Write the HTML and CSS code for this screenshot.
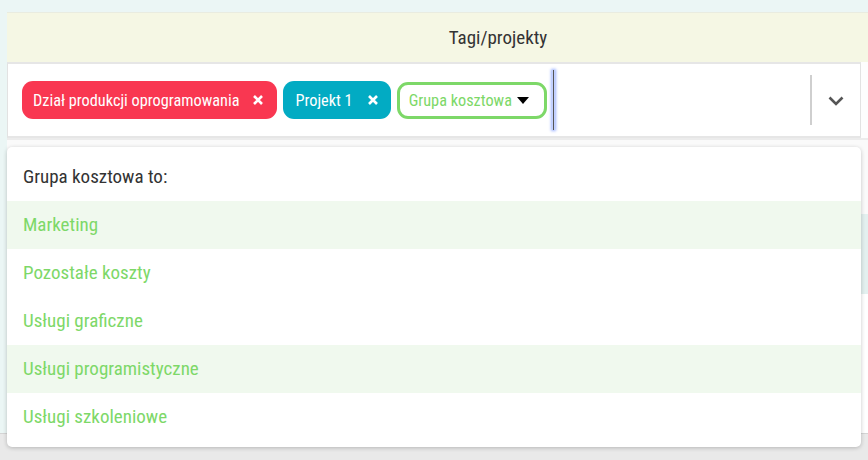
FILE: index.html
```html
<!DOCTYPE html>
<html>

<head>
    <title>Tagi/projekty</title>
    <link rel="stylesheet" href="styles.css">
</head>

<body>
    <div class="page">
        <div class="card">
            <div class="card-head">Tagi/projekty</div>
            <div class="select">
                <div class="tags">
                    <span class="tag tag-red">Dział produkcji oprogramowania
                        <svg class="tag-x" width="10" height="10" viewBox="0 0 10 10"><path d="M1 1L9 9M9 1L1 9" /></svg>
                    </span>
                    <span class="tag tag-teal">Projekt 1
                        <svg class="tag-x" width="10" height="10" viewBox="0 0 10 10"><path d="M1 1L9 9M9 1L1 9" /></svg>
                    </span>
                    <span class="tag tag-group">Grupa kosztowa
                        <svg class="caret" width="12" height="7" viewBox="0 0 12 7"><path d="M0 0H12L6 7Z" /></svg>
                    </span>
                    <span class="cursor"></span>
                </div>
                <div class="indicators">
                    <span class="sep"></span>
                    <svg class="chevron" width="16" height="10" viewBox="0 0 16 10"><path d="M1.5 1.5L8 8L14.5 1.5" /></svg>
                </div>
            </div>
            <div class="below">
                <div class="below-gap"></div>
                <div class="below-row"></div>
                <div class="below-rest"></div>
            </div>
        </div>
        <div class="footer"></div>

        <!-- dropdown opened over the table -->
        <div class="menu">
            <div class="menu-title">Grupa kosztowa to:</div>
            <div class="menu-item active">Marketing</div>
            <div class="menu-item">Pozostałe koszty</div>
            <div class="menu-item">Usługi graficzne</div>
            <div class="menu-item active">Usługi programistyczne</div>
            <div class="menu-item">Usługi szkoleniowe</div>
        </div>
    </div>
</body>

</html>
```

FILE: styles.css
```css
body {
    margin: 0;
    background-color: #ebf6f5;
    font-family: Roboto, "Liberation Sans", sans-serif;
    font-stretch: 87.5%;
    overflow: hidden;
}

.page {
    position: relative;
    height: 460px;
    display: flex;
    flex-direction: column;
    overflow: hidden;
}

.card {
    margin: 12px 0 0 7px;
    width: 982px;
    background-color: #fdfdfd;
}

.card-head {
    height: 49px;
    line-height: 49px;
    background-color: #f5f7e4;
    border-top: 1px solid #e9ece0;
    text-align: center;
    font-size: 19px;
    color: #333;
}

.select {
    width: 852px;
    height: 72px;
    display: flex;
    align-items: center;
    justify-content: space-between;
    background-color: #fff;
    border-top: 2px solid #e6e6e6;
    border-bottom: 2px solid #e6e6e6;
    border-left: 1px solid #e2e2e2;
    border-right: 1px solid #e2e2e2;
}

.tags {
    display: flex;
    align-items: center;
    gap: 6px;
    padding-left: 14px;
}

.tag {
    display: flex;
    align-items: center;
    height: 38px;
    border-radius: 11px;
    font-size: 16.3px;
    color: #fff;
    box-sizing: border-box;
}

.tag-red {
    background-color: #f93751;
    padding: 0 14px 0 11px;
    gap: 14px;
}

.tag-teal {
    background-color: #02abc3;
    padding: 0 13px 0 12px;
    gap: 15px;
}

.tag-x path {
    stroke: #fff;
    stroke-width: 2.6;
    fill: none;
}

.tag-group {
    height: 37px;
    border: 3px solid #7dd868;
    background-color: #fff;
    color: #7dd868;
    padding: 0 15px 0 9px;
    gap: 5px;
}

.caret path {
    fill: #000;
}

.cursor {
    width: 1px;
    height: 60px;
    margin-left: -1px;
    background-color: #555;
    border-left: 1px solid #c4d2ff;
    border-right: 1px solid #c4d2ff;
    box-shadow: 0 0 3px 1px #9fb5ff;
}

.indicators {
    display: flex;
    align-items: center;
    height: 100%;
}

.sep {
    width: 2px;
    height: 50px;
    background-color: #cfcfcf;
}

.chevron {
    margin: 2px 16px 0 16px;
}

.chevron path {
    stroke: #555;
    stroke-width: 2.6;
    fill: none;
}

.below-gap {
    height: 74px;
    border-top: 2px solid #ececec;
    background-color: #fafafa;
}

.below-row {
    height: 80px;
    background-color: #e3f0ef;
    border-left: 2px solid #21b8a6;
}

.below-rest {
    height: 139px;
    background-color: #fff;
}

.footer {
    flex: 1;
    background-color: #e9e9e9;
    border-top: 1px solid #d4d4d4;
}

.menu {
    position: absolute;
    left: 7px;
    top: 147px;
    width: 854px;
    padding: 6px 0;
    background-color: #fff;
    border-radius: 5px;
    box-shadow: 0 1px 4px rgba(0, 0, 0, 0.22);
}

.menu-title,
.menu-item {
    height: 48px;
    line-height: 48px;
    padding-left: 16px;
    font-size: 19px;
}

.menu-title {
    color: #333;
}

.menu-item {
    color: #7dd868;
}

.menu-item.active {
    background-color: #f0f9ee;
}
```
